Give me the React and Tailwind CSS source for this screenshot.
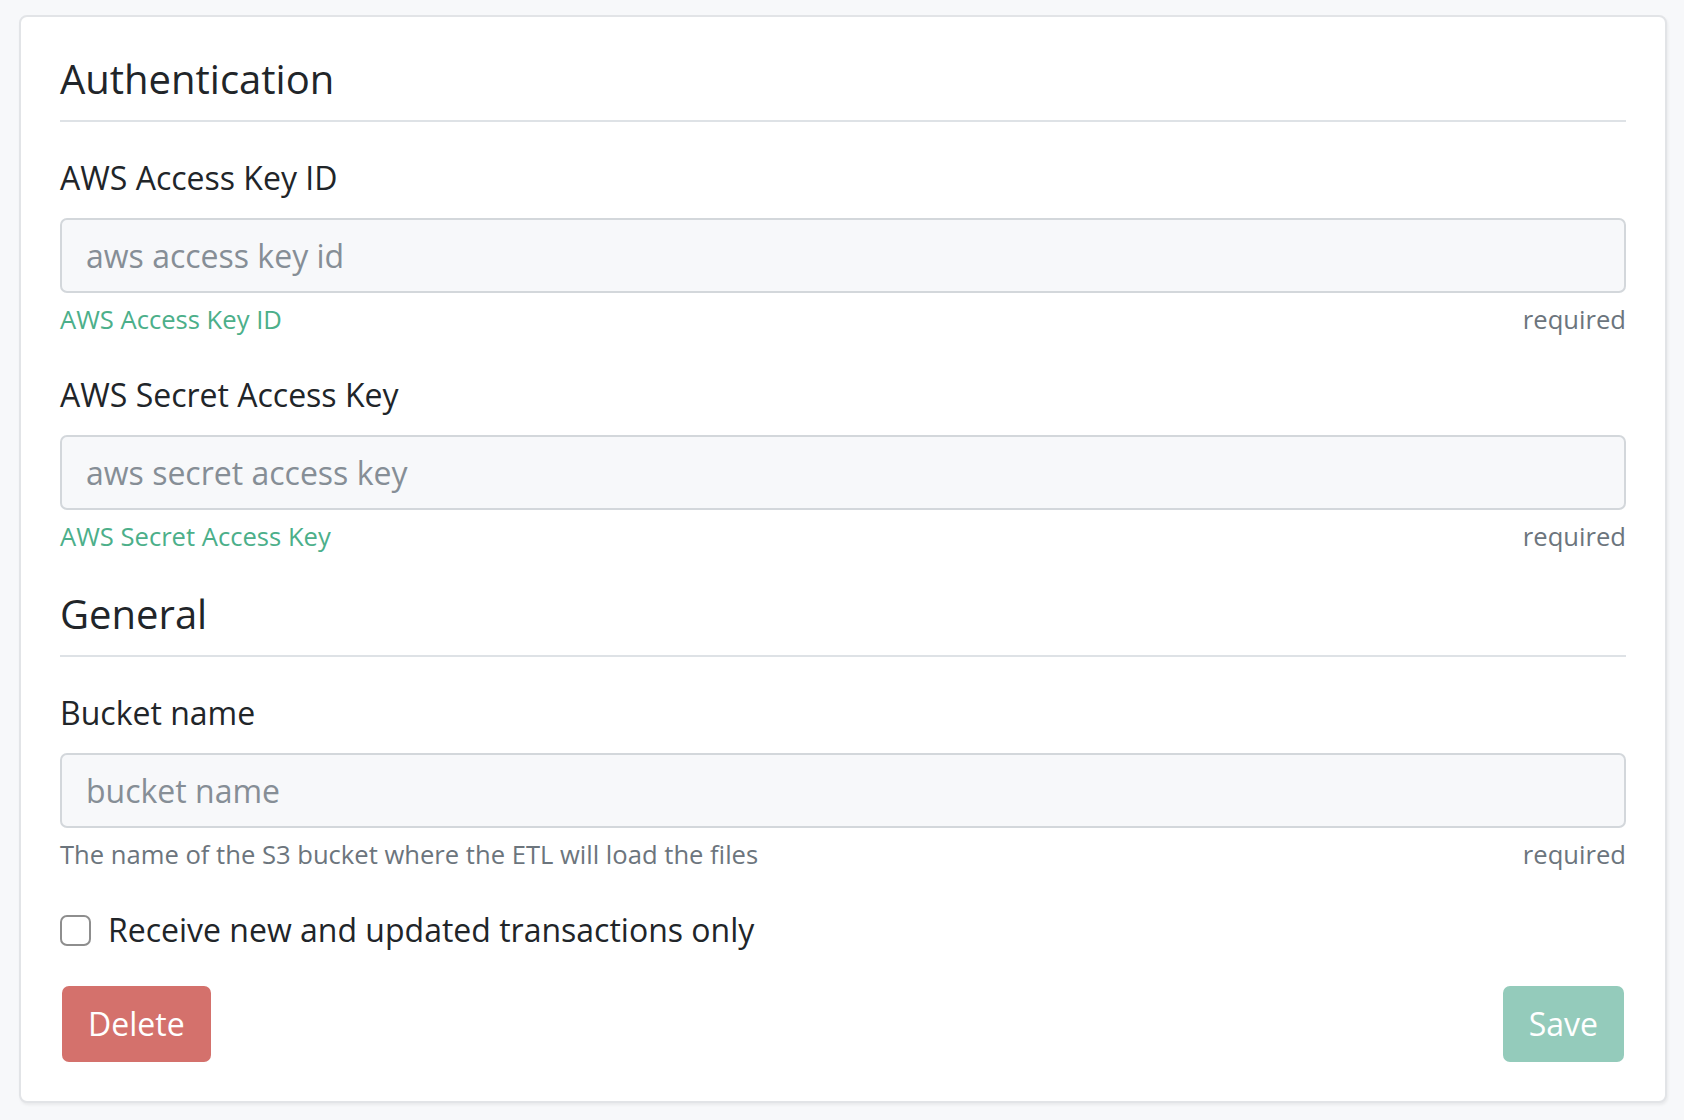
import React from "react";

const font = { fontFamily: '"Open Sans", "Noto Sans", sans-serif' };

function Field({ label, placeholder, help, helpClass }) {
  return (
    <div className="mt-[32px]">
      <label className="block text-[32px] leading-[48px] text-[#212529]">{label}</label>
      <input
        type="text"
        placeholder={placeholder}
        className="mt-[16px] block h-[75px] w-full rounded-[7px] border-2 border-[#d3d7db] bg-[#f7f8fa] px-[24px] text-[32px] leading-[48px] text-[#212529] placeholder:text-[#868e96] outline-none"
        style={font}
      />
      <div className="mt-[8px] flex justify-between text-[25.6px] leading-[38.4px]">
        <span className={helpClass}>{help}</span>
        <span className="text-[#6c757d]">required</span>
      </div>
    </div>
  );
}

function Section({ title, children, first }) {
  return (
    <div className={first ? "" : "mt-[33px]"}>
      <h3 className="border-b-2 border-[#dee2e6] pb-[17px] text-[40px] leading-[48px] font-normal text-[#212529]">
        {title}
      </h3>
      {children}
    </div>
  );
}

export default function App() {
  return (
    <div className="min-h-screen bg-[#f7f8fa] pl-[19px] pr-[17px] pt-[15px] pb-[18px]" style={font}>
      <div className="w-[1648px] rounded-[8px] border-2 border-[#e2e4e7] bg-white px-[39px] pt-[38px] pb-[39px] shadow-[1px_2px_3px_rgba(0,0,0,0.06)]">
        <Section title="Authentication" first>
          <Field
            label="AWS Access Key ID"
            placeholder="aws access key id"
            help="AWS Access Key ID"
            helpClass="text-[#4caf8a]"
          />
          <Field
            label="AWS Secret Access Key"
            placeholder="aws secret access key"
            help="AWS Secret Access Key"
            helpClass="text-[#4caf8a]"
          />
        </Section>
        <Section title="General">
          <Field
            label="Bucket name"
            placeholder="bucket name"
            help="The name of the S3 bucket where the ETL will load the files"
            helpClass="text-[#6c757d]"
          />
        </Section>
        <div className="mt-[32px] flex items-center gap-[17px] text-[32px] leading-[48px] text-[#212529]">
          <span className="block h-[31px] w-[31px] rounded-[7px] border-2 border-[#8e8e8e] bg-white"></span>
          <span>Receive new and updated transactions only</span>
        </div>
        <div className="mt-[32px] flex justify-between px-[2px]">
          <button className="h-[76px] rounded-[7px] border-2 border-transparent bg-[#d4716c] px-[24px] text-[32px] leading-[48px] text-white">
            Delete
          </button>
          <button className="h-[76px] rounded-[7px] border-2 border-transparent bg-[#94cbbb] px-[24px] text-[32px] leading-[48px] text-white">
            Save
          </button>
        </div>
      </div>
    </div>
  );
}
